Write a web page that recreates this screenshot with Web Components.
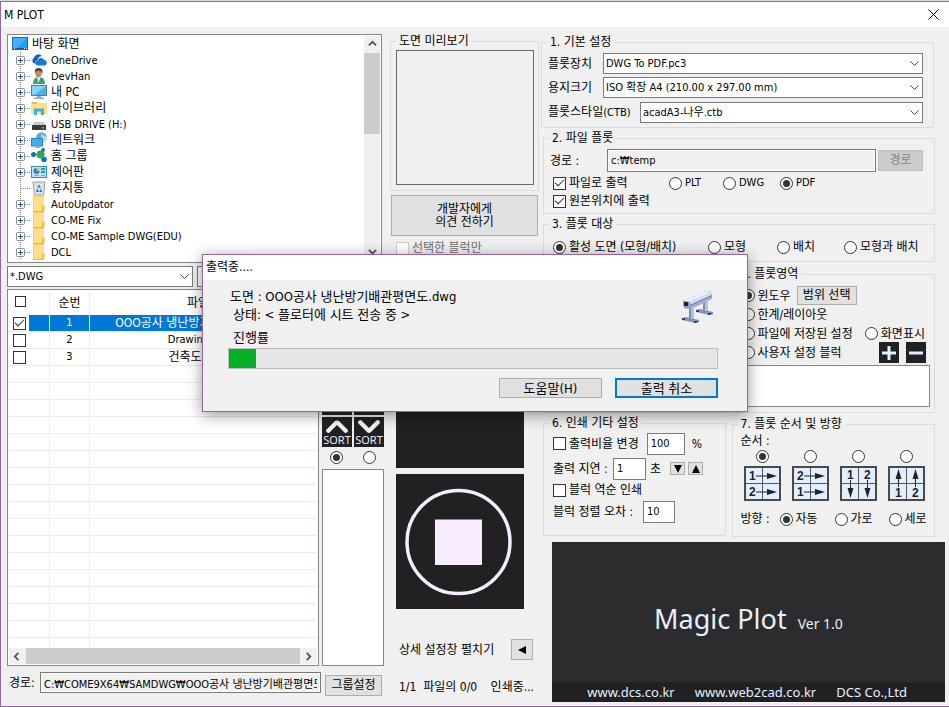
<!DOCTYPE html>
<html lang="ko">
<head>
<meta charset="utf-8">
<title>M PLOT</title>
<style>
body { margin: 0; background: #dcdcdc; color: #000; font: 12px/16px "DejaVu Sans Condensed", "Noto Sans CJK KR", sans-serif; }
</style>
</head>
<body>
<plot-app></plot-app>
<script>
const base = `<style>
*, *::before, *::after { box-sizing: border-box; }
:host { box-sizing: border-box; display: block; }
:host([hidden]) { display: none; }
input, select, button { font: inherit; color: inherit; margin: 0; border-radius: 0; }
</style>`;

function define(name, render) {
  customElements.define(name, class extends HTMLElement {
    constructor() { super(); this.attachShadow({ mode: 'open' }); }
    connectedCallback() {
      const t = document.createElement('template');
      t.innerHTML = base + render(this);
      this.shadowRoot.replaceChildren(t.content.cloneNode(true));
    }
  });
}

/* ---------- basic controls ---------- */

define('plot-group', () => `<style>
:host { display: flex; }
fieldset { flex: 1; min-width: 0; margin: 0; border: 1px solid #dcdcdc; padding: 0 4px 4px 6px; }
legend { padding: 0 3px; margin-left: -1px; height: 16px; line-height: 16px; white-space: nowrap; }
</style><fieldset><legend><slot name="title"></slot></legend><slot></slot></fieldset>`);

define('plot-choice', el => `<style>
:host { display: inline-block; white-space: nowrap; }
label { display: flex; align-items: center; gap: 3px; }
input { appearance: none; flex: none; width: var(--box, 13px); height: var(--box, 13px); border: 1px solid #333; background: #fff; display: grid; place-items: center; }
input[type=radio] { border-radius: 50%; }
input[type=radio]:checked::before { content: ""; width: 7px; height: 7px; border-radius: 50%; background: #333; }
input[type=checkbox]:checked::before { content: ""; width: 9px; height: 5px; margin-top: -3px; border: solid #333; border-width: 0 0 1px 1px; transform: rotate(-45deg); }
input:disabled { border-color: #ccc; }
input:disabled + span { color: #6d6d6d; }
:host([bare]) label { gap: 0; }
</style><label><input type="${el.getAttribute('type')}" name="${el.getAttribute('name') || 'opt'}"
 ${el.hasAttribute('checked') ? 'checked' : ''} ${el.hasAttribute('disabled') ? 'disabled' : ''}
 ${el.hasAttribute('bare') ? `aria-label="${el.getAttribute('label')}"` : ''}><span><slot></slot></span></label>`);

define('plot-button', el => `<style>
button { width: 100%; height: 100%; padding: 0; border: 1px solid #adadad; background: #e1e1e1; line-height: 13px; display: grid; place-items: center; }
:host([primary]) button { border: 2px solid #0078d7; }
button:disabled { background: #ccc; border-color: #bfbfbf; color: #838383; }
:host([dark]) button { border: 0; background: #212123; color: #e0eeff; overflow: hidden; }
</style><button type="button" ${el.hasAttribute('label') ? `aria-label="${el.getAttribute('label')}"` : ''} ${el.hasAttribute('disabled') ? 'disabled' : ''}><slot></slot></button>`);

define('plot-select', el => `<style>
:host { min-width: 0; position: relative; font-size: 11px; }
select { appearance: none; width: 100%; height: 21px; border: 1px solid #7a7a7a; background: #fff; padding: 0 20px 0 2px; }
svg { position: absolute; right: 4px; top: 8px; pointer-events: none; }
</style><select aria-label="${el.getAttribute('label')}"><option>${el.getAttribute('value')}</option></select>
<svg width="9" height="6" viewBox="0 0 9 6"><path d="M.5.5l4 4 4-4" fill="none" stroke="#444"/></svg>`);

define('plot-input', el => `<style>
:host { min-width: 0; font-size: 11px; }
label { display: flex; align-items: center; height: 100%; font-size: 12px; white-space: nowrap; }
input { font-size: 11px; flex: 1; min-width: 0; width: 100%; height: 100%; border: 1px solid #7a7a7a; background: #fff; padding: 0 3px; }
span { width: var(--label-width, auto); }
:host([flat]) input { background: #f0f0f0; outline: 1px solid #fff; outline-offset: -2px; }
</style><label><span>${el.getAttribute('label')}</span><input type="text" value="${el.getAttribute('value')}" ${el.hasAttribute('flat') ? 'readonly' : ''}></label>`);

/* ---------- directory tree ---------- */

const icons = {
  desktop: `<rect x=".5" y="1.5" width="15" height="12" fill="#1e9df7" stroke="#0a6fc0"/><path d="M1 2h14L4 13H1z" fill="#3fb2ff"/><path d="M1 12h14v1.5H1z" fill="#0b5fa8"/><path d="M2 12h1v1H2zM12 12h1v1h-1zM14 12h.8v1H14z" fill="#fff"/>`,
  cloud: `<path d="M3.5 11.5a3 3 0 0 1-.6-5.5A4.500 4.500 0 0 1 11 4.300 4 4 0 0 0 6.500 8 2.500 2.500 0 0 0 5 11.500z" fill="#0f62b8"/><path d="M6.500 13.500a2.700 2.700 0 0 1 .2-5.300A3.600 3.600 0 0 1 13.300 8a2.800 2.800 0 0 1 .4 5.500z" fill="#1278d0"/>`,
  user: `<path d="M2 16q0-7 6-7t6 7z" fill="#3f9b76"/><path d="M6 8l1 7 3-6z" fill="#e8f1ec"/><ellipse cx="7.5" cy="5" rx="3.2" ry="4.2" fill="#c08a62"/><path d="M4 5Q3 0 8 0q5 1 3 6l-1-3-4-.5z" fill="#4c3b33"/>`,
  pc: `<rect x=".5" y="1.5" width="15" height="10" fill="#49b4ef" stroke="#477fa5"/><path d="M1 2h14L3 11H1z" fill="#8bd3fa"/><path d="M6 12h4v1.500h3v1.500H3v-1.500h3z" fill="#9aaab5"/>`,
  library: `<path d="M0 2h6l1 1h9v11H0z" fill="#ffdf87"/><path d="M1 2h5v2H1z" fill="#f3b94c"/><path d="M3 15V8.500h10V15h-3v-3.500H6V15z" fill="#37aee8"/>`,
  drive: `<path d="M3 6h10l2 4H1z" fill="#c9c9c9"/><path d="M1 9h14v5H1z" fill="#3a3a3a"/><path d="M11 11h2v1.500h-2z" fill="#3ee08a"/>`,
  network: `<circle cx="10.5" cy="5.5" r="5.3" fill="#5aa7d8"/><path d="M8 1q4 2 2 5t3 4q3-2 3-5z" fill="#b9dcef"/><rect x=".5" y="6.5" width="11" height="7.5" fill="#3fb0f2" stroke="#2b7fb8"/><path d="M4 15h5v1H4z" fill="#8aa"/>`,
  homegroup: `<path d="M2 7l8-1 3-4M10 7l4 5" stroke="#7da8c8" fill="none"/><circle cx="2.5" cy="6.5" r="2.5" fill="#1a6bb5"/><circle cx="13" cy="11.5" r="2.8" fill="#1a6bb5"/><circle cx="9.5" cy="6.5" r="4" fill="#2cab57"/><circle cx="12" cy="2" r="2" fill="#1f75bd"/>`,
  control: `<rect x=".5" y="2.5" width="15" height="11" fill="#bfe4fb" stroke="#2d8fd0"/><circle cx="5.5" cy="7" r="3" fill="#1f86cf"/><path d="M5.500 7V3.500a3.300 3.300 0 0 1 3.200 3.500z" fill="#f6b73c"/><path d="M10 4h4v2h-4zM10 7h4v2h-4z" fill="#2d8fd0"/><path d="M3 11h5v1H3zM10 11h4v1h-4z" fill="#f08a2c"/>`,
  bin: `<path d="M2 2h12l-1.500 13h-9z" fill="#dfe3e6" stroke="#9aa0a5"/><path d="M8 4.500l2 3H6zM4.800 12l1.400-3.500 2 3.500zM11.200 12L9.800 8.500l-1.500 3.500z" fill="#2680c8"/>`,
  folder: `<path d="M2 0h11v16H2z" fill="#ffe08a"/><path d="M2 0h11v1H2zM2 0h1v16H2z" fill="#f3cf6a"/><path d="M2.500 15.500h9v-5q0-1.500 1.500-1v5q0 1-1.500 1" fill="#ffe9a8" stroke="#e9b93c"/>`
};

define('plot-tree-item', el => `<style>
:host { display: flex; align-items: center; height: 16px; padding-left: 5px; white-space: nowrap; font-size: 12px; }
:host([root]) { padding-left: 4px; }
:host([latin]) { font-size: 11px; line-height: 17px; }
svg { flex: none; }
span { padding-left: 4px; }
</style>${el.hasAttribute('root') ? '' : `<svg width="18" height="16" viewBox="0 0 18 16"><path d="M7.5 0v16M8 8.5h10" stroke="#808080" stroke-dasharray="1 1" fill="none"/>
${el.hasAttribute('leaf') ? '' : `<rect x="3.5" y="4.5" width="8" height="8" rx="1" fill="#f7f7f7" stroke="#919191"/><path d="M5 8.5h5M7.5 6v5" stroke="#2a4a9c"/>`}</svg>`}
<svg width="16" height="16" viewBox="0 0 16 16">${icons[el.getAttribute('icon')]}</svg><span><slot></slot></span>`);

const arrow = { up: 'M1 6l4-4 4 4', down: 'M1 2l4 4 4-4', left: 'M6 1L2 5l4 4', right: 'M3 1l4 4-4 4' };
define('plot-scrollbar', el => {
  const h = el.hasAttribute('horizontal');
  return `<style>
:host { display: flex; flex-direction: ${h ? 'row' : 'column'}; background: #f0f0f0; flex: none; ${h ? 'height' : 'width'}: 16px; }
svg { flex: none; width: 17px; height: 17px; padding: 4px; }
i { background: #cdcdcd; flex: ${h ? '1' : '0 0 81px'}; }
.gap { flex: ${h ? '0' : '1'}; background: none; }
path { fill: none; stroke: #555; stroke-width: 2; }
</style><svg viewBox="0 0 10 10"><path d="${arrow[h ? 'left' : 'up']}"/></svg><i></i><i class="gap"></i><svg viewBox="0 0 10 10"><path d="${arrow[h ? 'right' : 'down']}"/></svg>`;
});

define('plot-tree', () => `<style>
:host { display: flex; height: 229px; border: 1px solid #828790; background: #fff; padding: 1px 1px 1px 0; overflow: hidden; }
div { flex: 1; min-width: 0; overflow: hidden; }
</style><div role="tree"><slot></slot></div><plot-scrollbar></plot-scrollbar>`);

/* ---------- drawing list ---------- */

define('plot-files', () => {
  const row = (n, name, cls) => {
    const sel = cls.includes('sel');
    return `<tr class="${cls}"><td class="c"><plot-choice type="checkbox" bare label="${n}" ${sel ? 'checked' : ''}></plot-choice></td><td>${n}</td><td>${name}</td></tr>`;
  };
  return `<style>
:host { display: flex; flex-direction: column; border: 1px solid #828790; background: #fff; min-height: 0; overflow: hidden; padding: 1px; }
.rows { flex: 1 1 0; overflow: hidden; min-height: 0; }
table { border-collapse: separate; border-spacing: 0; table-layout: fixed; width: 100%; }
th, td { padding: 0; text-align: center; font-weight: normal; height: 17px; line-height: 16px; border-right: 1px solid #ececec; border-bottom: 1px solid #ececec; white-space: nowrap; overflow: hidden; }
th { height: 24px; border-bottom-color: #fff; }
th:last-child, td:last-child { border-right: 0; }
td { font-size: 11px; }
.ko td:last-child { font-size: 12px; }
.c { text-align: left; padding-left: 4px; }
th:first-child { text-align: left; padding-left: 6px; --box: 11px; }
plot-choice { display: block; height: 13px; }
.sel td { background: #0078d7; color: #fff; }
.sel .c { background: linear-gradient(90deg, #fff 20px, #0078d7 20px); }
</style><div class="rows"><table><colgroup><col style="width:41px"><col style="width:40px"><col></colgroup>
<thead><tr><th><plot-choice type="checkbox" bare label="전체 선택"></plot-choice></th><th>순번</th><th>파일명</th></tr></thead>
<tbody>${row(1, 'OOO공사 냉난방기배관평면도.dwg', 'sel ko')}${row(2, 'Drawing1.dwg', '')}${row(3, '건축도면.dwg', 'ko')}${'<tr><td></td><td></td><td></td></tr>'.repeat(17)}</tbody></table></div>
<plot-scrollbar horizontal></plot-scrollbar>`;
});

define('plot-sort', () => {
  const b = (d, l) => `<plot-button dark label="${l}"><svg width="24" height="13" viewBox="0 0 24 13"><path d="${d}" fill="#f2f2f2"/></svg><span>SORT</span></plot-button>`;
  const up = 'M1 10L10 1Q12 0 14 1L23 10Q23 13 20 13L12 5 4 13Q1 13 1 10z', dn = 'M1 3L10 12Q12 14 14 12L23 3Q23 0 20 0L12 8 4 0Q1 0 1 3z';
  return `<style>
:host { display: flex; flex-direction: column; width: 62px; }
.grid { display: grid; grid-template-columns: 30px 30px; gap: 2px; padding-top: 96px; }
plot-button { height: 30px; font: 11px "Noto Sans", sans-serif; }
svg { display: block; margin: 3px auto 0; }
span { display: block; line-height: 14px; }
.radios { display: flex; padding: 4px 8px 5px; justify-content: space-between; }
.list { flex: 1; border: 1px solid #828790; background: #fff; }
</style><div class="grid">${b(up, '이름 오름차순')}${b(dn, '이름 내림차순')}${b(up, '오름차순')}${b(dn, '내림차순')}</div>
<div class="radios"><plot-choice type="radio" bare label="오름차순" checked></plot-choice><plot-choice type="radio" bare label="내림차순"></plot-choice></div>
<div class="list" role="listbox" aria-label="그룹 목록"></div>`;
});

define('plot-left', () => `<style>
:host { display: flex; flex-direction: column; min-width: 0; }
plot-tree { margin-right: 2px; }
.filter { display: flex; gap: 4px; margin: 3px 2px 2px 0; }
.filter plot-select { flex: 0 0 186px; }
.filter plot-input { flex: 1; }
.lists { flex: 1; display: flex; gap: 3px; min-height: 0; }
plot-files { flex: 1; min-width: 0; }
.path { display: flex; gap: 4px; padding: 6px 2px 0; align-items: start; }
.path plot-input { flex: 1; height: 21px; --label-width: 31px; }
.path plot-button { width: 57px; height: 21px; margin-top: 3px; }
</style>
<plot-tree>
<plot-tree-item root icon="desktop">바탕 화면</plot-tree-item>
<plot-tree-item latin icon="cloud">OneDrive</plot-tree-item>
<plot-tree-item latin icon="user">DevHan</plot-tree-item>
<plot-tree-item icon="pc">내 PC</plot-tree-item>
<plot-tree-item icon="library">라이브러리</plot-tree-item>
<plot-tree-item latin icon="drive">USB DRIVE (H:)</plot-tree-item>
<plot-tree-item icon="network">네트워크</plot-tree-item>
<plot-tree-item icon="homegroup">홈 그룹</plot-tree-item>
<plot-tree-item icon="control">제어판</plot-tree-item>
<plot-tree-item leaf icon="bin">휴지통</plot-tree-item>
<plot-tree-item latin icon="folder">AutoUpdator</plot-tree-item>
<plot-tree-item latin icon="folder">CO-ME Fix</plot-tree-item>
<plot-tree-item latin icon="folder">CO-ME Sample DWG(EDU)</plot-tree-item>
<plot-tree-item latin icon="folder">DCL</plot-tree-item>
</plot-tree>
<div class="filter"><plot-select label="파일 형식" value="*.DWG"></plot-select><plot-input label="" value=""></plot-input></div>
<div class="lists"><plot-files></plot-files><plot-sort></plot-sort></div>
<div class="path"><plot-input flat label="경로:" value="C:₩COME9X64₩SAMDWG₩OOO공사 냉난방기배관평면도.dwg"></plot-input><plot-button>그룹설정</plot-button></div>`);

/* ---------- middle column ---------- */

define('plot-middle', () => `<style>
:host { display: flex; flex-direction: column; }
plot-group { height: 158px; margin: -1px 0 4px; }
.preview { height: 135px; margin: 1px 0 0 -1px; border: 1px solid #696969; }
.feedback { height: 41px; margin: 0 1px; }
.only { margin: 4px 6px 0; }
.run, .stop { margin: 0 15px 0 6px; }
.run { height: 136px; margin-top: 76px; }
.stop { height: 135px; margin-top: 6px; }
.more { display: flex; justify-content: space-between; align-items: center; margin: 30px 6px 0 9px; }
.more plot-button { width: 22px; height: 21px; }
.status { display: flex; justify-content: space-between; margin: 19px 5px 0 9px; }
</style>
<plot-group><span slot="title">도면 미리보기</span><div class="preview"></div></plot-group>
<plot-button class="feedback">개발자에게<br>의견 전하기</plot-button>
<plot-choice class="only" type="checkbox" disabled>선택한 블럭만</plot-choice>
<plot-button dark class="run" label="출력"></plot-button>
<plot-button dark class="stop" label="정지"><svg width="128" height="135" viewBox="0 0 128 135"><circle cx="62.5" cy="68" r="51.5" fill="none" stroke="#f7ebfd" stroke-width="3.5"/><path d="M39 45.500h47V91H39z" fill="#f7ebfd"/></svg></plot-button>
<div class="more"><span>상세 설정창 펼치기</span><plot-button label="펼치기"><svg width="8" height="8" viewBox="0 0 8 8"><path d="M8 0v8L0 4z"/></svg></plot-button></div>
<div class="status"><span>1/1 &nbsp;파일의 0/0</span><span>인쇄중...</span></div>`);

/* ---------- right column ---------- */

define('plot-order', el => {
  const v = el.getAttribute('order'), T = (x, y, n) => `<text x="${x}" y="${y}">${n}</text>`;
  const R = y => `<path d="M12 ${y}h14"/><path class="h" d="M23 ${y - 3}l10 3-10 3z"/>`;
  const D = x => `<path d="M${x} 14v12"/><path class="h" d="M${x - 3} 22h6l-3 10z"/>`;
  const U = x => `<path d="M${x} 9v12"/><path class="h" d="M${x - 3} 13h6l-3-10z"/>`;
  const art = { r12: T(5, 14, 1) + T(5, 30, 2) + R(10) + R(26), r21: T(5, 14, 2) + T(5, 30, 1) + R(10) + R(26),
    d12: D(10.5) + D(27.5) + T(7, 13, 1) + T(24, 13, 2), u12: U(10.5) + U(27.5) + T(7, 31, 1) + T(24, 31, 2) }[v];
  return `<style>
:host { display: grid; justify-items: center; gap: 3px; }
svg { display: block; }
text { font: bold 12px "Liberation Sans", sans-serif; fill: #222; }
path { stroke: #222; fill: none; } .h { fill: #222; stroke: none; }
</style><plot-choice type="radio" bare label="${v}" ${el.hasAttribute('checked') ? 'checked' : ''}></plot-choice>
<svg width="37" height="35" viewBox="0 0 37 35"><rect x="1" y="1" width="35" height="33" fill="#e2efff" stroke="#4a4a4a" stroke-width="2"/><path d="M2 17.500h33M18.500 2v31" style="stroke:#555"/>${art}</svg>`;
});

define('plot-banner', () => `<style>
:host { display: flex; flex-direction: column; background: #2c2c2e; color: #e4f1ff; font-family: "Noto Sans", sans-serif; height: 160px; }
h1 { flex: 1; margin: 0; display: flex; align-items: baseline; justify-content: center; gap: 11px; font-size: 27px; line-height: 36px; font-weight: 400; padding-top: 59px; }
small { font-size: 14px; }
nav { background: #212123; display: flex; gap: 20px; justify-content: flex-end; padding: 0 38px; font-size: 13px; line-height: 20px; white-space: nowrap; }
a { color: inherit; text-decoration: none; }
</style><h1>Magic Plot <small>Ver 1.0</small></h1><nav><a href="http://www.dcs.co.kr">www.dcs.co.kr</a><a href="http://www.web2cad.co.kr">www.web2cad.co.kr</a><span>DCS Co.,Ltd</span></nav>`);

define('plot-right', () => `<style>
:host { display: flex; flex-direction: column; min-width: 0; gap: 2px; }
plot-group, .pair { margin-right: 10px; }
.row { display: flex; align-items: center; white-space: nowrap; }
.basic { height: 94px; margin: 0 11px 0 -2px; }
.basic .row { height: 21px; margin: 3px 6px 0 0; }
.basic .row + .row + .row { margin-top: 4px; }
.basic div > span { width: 55px; }
.basic div > .wide { width: 92px; }
.basic plot-select { flex: 1; }
.basic small { font-size: 11px; }
.file { height: 84px; } .target { height: 46px; }
.file .row { margin-top: 3px; }
.file plot-input { flex: 1; height: 23px; --label-width: 57px; }
.file plot-button { width: 45px; height: 21px; margin: 0 7px 0 2px; }
.opts { margin: 3px 0 0 3px; }
.opts + .opts { margin-top: 2px; }
.latin { font-size: 11px; }
.grid { display: grid; align-items: center; white-space: nowrap; }
.formats { grid-template-columns: 116px 54px 57px auto; }
.targets { grid-template-columns: 155px 69px 67px auto; margin: 7px 0 0 3px; }
.pair { display: grid; grid-template-columns: 183fr 204fr; column-gap: 6px; }
.pair plot-group { margin: 0; }
.top plot-group { height: 147px; margin-top: 2px; }
.bottom plot-group { height: 121px; }
.bottom .order { margin-top: 1px; }
.area .row { height: 19px; margin-left: 3px; }
.area .row:first-of-type { margin-top: 4px; }
.area .row > plot-choice + plot-button { margin-left: 6px; width: 60px; height: 19px; }
.tail { margin-left: auto; margin-right: 5px; }
.icons { display: flex; gap: 7px; margin-left: auto; margin-right: 4px; }
.icons plot-button { width: 20px; height: 21px; }
.area .list { height: 42px; margin: 3px 0 0; border: 1px solid #828790; background: #fff; }
.etc .row { height: 23px; padding-left: 3px; }
.etc .short { height: 20px; }
.etc .row:first-of-type { margin: 1px 0 2px; }
.num { height: 22px; }
.ratio { width: 38px; margin: 0 7px 0 8px; --label-width: 0; }
.delay { width: 93px; margin-right: 4px; --label-width: 60px; }
.error { width: 122px; --label-width: 90px; }
.step { display: flex; gap: 3px; margin-left: 9px; }
.step plot-button { width: 15px; height: 13px; }
.caption { margin: 1px 0 0 2px; }
.orders { display: flex; justify-content: space-between; margin: 1px 5px 0; }
.turn { grid-template-columns: 39px 55px 54px auto; margin: 10px 0 0 2px; }
plot-banner { margin: 3px 0 4px 9px; }
</style>
<plot-group class="basic"><span slot="title">1. 기본 설정</span>
<div class="row"><span>플롯장치</span><plot-select label="플롯장치" value="DWG To PDF.pc3"></plot-select></div>
<div class="row"><span>용지크기</span><plot-select label="용지크기" value="ISO 확장 A4 (210.00 x 297.00 mm)"></plot-select></div>
<div class="row"><span class="wide">플롯스타일<small>(CTB)</small></span><plot-select label="플롯스타일(CTB)" value="acadA3-나우.ctb"></plot-select></div>
</plot-group>
<plot-group class="file"><span slot="title">2. 파일 플롯</span>
<div class="row"><plot-input flat label="경로 :" value="c:₩temp"></plot-input><plot-button disabled>경로</plot-button></div>
<div class="opts grid formats"><plot-choice type="checkbox" checked>파일로 출력</plot-choice><plot-choice class="latin" type="radio">PLT</plot-choice><plot-choice class="latin" type="radio">DWG</plot-choice><plot-choice class="latin" type="radio" checked>PDF</plot-choice></div>
<div class="opts grid"><plot-choice type="checkbox" checked>원본위치에 출력</plot-choice></div>
</plot-group>
<plot-group class="target"><span slot="title">3. 플롯 대상</span>
<div class="grid targets"><plot-choice type="radio" checked>활성 도면 (모형/배치)</plot-choice><plot-choice type="radio">모형</plot-choice><plot-choice type="radio">배치</plot-choice><plot-choice type="radio">모형과 배치</plot-choice></div>
</plot-group>
<div class="pair top"><plot-group></plot-group>
<plot-group class="area"><span slot="title">5. 플롯영역</span>
<div class="row"><plot-choice type="radio" checked>윈도우</plot-choice><plot-button>범위 선택</plot-button></div>
<div class="row"><plot-choice type="radio">한계/레이아웃</plot-choice></div>
<div class="row"><plot-choice type="radio">파일에 저장된 설정</plot-choice><plot-choice class="tail" type="radio">화면표시</plot-choice></div>
<div class="row"><plot-choice type="radio">사용자 설정 블럭</plot-choice><div class="icons"><plot-button dark label="추가"><svg width="14" height="14"><path d="M0 7h14M7 0v14" stroke="#e4f1ff" stroke-width="3"/></svg></plot-button><plot-button dark label="삭제"><svg width="14" height="14"><path d="M0 7h14" stroke="#e4f1ff" stroke-width="3"/></svg></plot-button></div></div>
<div class="list" role="listbox" aria-label="블럭 목록"></div>
</plot-group></div>
<div class="pair bottom"><plot-group class="etc"><span slot="title">6. 인쇄 기타 설정</span>
<div class="row"><plot-choice type="checkbox">출력비율 변경</plot-choice><plot-input class="num ratio" label="" value="100"></plot-input>%</div>
<div class="row"><plot-input class="num delay" label="출력 지연 :" value="1"></plot-input>초<div class="step"><plot-button label="감소"><svg width="8" height="8"><path d="M0 0h8L4 8z"/></svg></plot-button><plot-button label="증가"><svg width="8" height="8"><path d="M0 8h8L4 0z"/></svg></plot-button></div></div>
<div class="row short"><plot-choice type="checkbox">블럭 역순 인쇄</plot-choice></div>
<div class="row"><plot-input class="num error" label="블럭 정렬 오차 :" value="10"></plot-input></div>
</plot-group>
<plot-group class="order"><span slot="title">7. 플롯 순서 및 방향</span>
<div class="caption">순서 :</div>
<div class="orders"><plot-order order="r12" checked></plot-order><plot-order order="r21"></plot-order><plot-order order="d12"></plot-order><plot-order order="u12"></plot-order></div>
<div class="grid turn"><span>방향 :</span><plot-choice type="radio" checked>자동</plot-choice><plot-choice type="radio">가로</plot-choice><plot-choice type="radio">세로</plot-choice></div>
</plot-group></div>
<plot-banner></plot-banner>`);

/* ---------- progress dialog ---------- */

define('plot-progress', () => `<style>
:host { position: absolute; left: 202px; right: 201px; top: 254px; height: 158px; border: 1px solid #9565a0; background: #f0f0f0; box-shadow: 0 3px 14px rgba(0,0,0,.42); font-size: 13px; line-height: 18px; display: flex; flex-direction: column; }
header { height: 25px; line-height: 24px; background: #fff; padding-left: 3px; font-size: 12px; }
.body { padding: 8px 29px 13px 25px; display: flex; flex-direction: column; flex: 1; }
.info { display: flex; justify-content: space-between; }
.info p { margin: 0 0 0 2px; }
.info p + p { margin-left: 5px; }
.info svg { margin: 2px 4px 0 0; }
progress { appearance: none; width: 100%; height: 21px; border: 1px solid #bcbcbc; background: #e6e6e6; display: block; }
progress::-webkit-progress-bar { background: #e6e6e6; }
progress::-webkit-progress-value { background: #06b025; }
label { margin: 5px 0 2px 5px; line-height: 17px; }
.buttons { display: flex; justify-content: flex-end; gap: 13px; margin-top: auto; }
.buttons plot-button { width: 103px; height: 20px; }
</style><header>출력중....</header><div class="body">
<div class="info"><div><p>도면 : OOO공사 냉난방기배관평면도.dwg</p><p>상태: &lt; 플로터에 시트 전송 중 &gt;</p></div>
<svg width="32" height="34" viewBox="0 0 32 34">
<path d="M14 20l4-1 13 3v2l-4 1-13-3z" fill="#8593b6"/><path d="M14 20h3v2h-3zM26 23h5l-3 2h-2z" fill="#34426a"/>
<path d="M21 10h5v12h-5z" fill="#7c8bb0"/><path d="M23 10h3v11h-3z" fill="#b5c2dd"/>
<path d="M0 28l4-1 13 3v2l-4 1-13-3z" fill="#8593b6"/><path d="M0 28h3v2H0zM12 31h5l-3 2h-2z" fill="#34426a"/>
<path d="M7 18h5v12H7z" fill="#7c8bb0"/><path d="M9 18h3v11H9z" fill="#b5c2dd"/>
<path d="M1 11L24 1l6 1v7L9 19l-7-1z" fill="#9fb0d2"/><path d="M1 11L24 1l6 1L8 12z" fill="#e6eefb"/>
<path d="M8 12L30 2v3L8 15z" fill="#d3def2"/><path d="M8 15L30 5v1L8 16z" fill="#67779f"/>
<path d="M1 11l7 1 1 7-7-1z" fill="#8c9cc4"/><path d="M2 12h4v4H2z" fill="#18233f"/></svg></div>
<label for="p">진행률</label><progress id="p" max="18" value="1"></progress>
<div class="buttons"><plot-button>도움말(H)</plot-button><plot-button primary>출력 취소</plot-button></div></div>`);

/* ---------- window ---------- */

define('plot-app', () => `<style>
:host { padding-top: 1px; min-height: 100vh; display: flex; position: relative; }
.win { flex: 1; min-width: 0; border: 1px solid #9565a0; border-right: 0; background: #f0f0f0; display: flex; flex-direction: column; }
header { height: 25px; background: #fff; display: flex; align-items: center; justify-content: space-between; padding: 0 10px 0 3px; }
header button { border: 0; background: none; padding: 0; width: 11px; height: 11px; display: block; }
header svg { display: block; }
main { flex: 1; display: grid; grid-template-columns: minmax(0, 377fr) 153px minmax(0, 408fr); padding: 7px 4px 0 6px; }
plot-left { padding-bottom: 10px; }
plot-middle { margin-left: 6px; margin-right: -2px; }
plot-right { margin-left: 6px; }
</style><div class="win"><header><span>M PLOT</span><button type="button" aria-label="닫기"><svg width="11" height="11"><path d="M.5.5l10 10M10.500.5l-10 10" stroke="#000"/></svg></button></header>
<main><plot-left></plot-left><plot-middle></plot-middle><plot-right></plot-right></main></div>
<plot-progress role="dialog" aria-label="출력중"></plot-progress>`);
</script>
</body>
</html>
